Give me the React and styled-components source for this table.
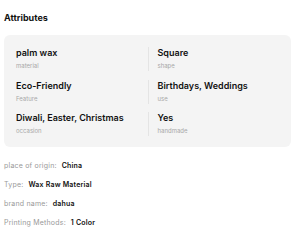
import { Fragment } from "react";
import styled, { createGlobalStyle } from "styled-components";

const GlobalStyle = createGlobalStyle`
  body {
    margin: 0;
    background: #fff;
    font-family: Inter, "Noto Sans", sans-serif;
    color: #111;
  }
`;

const Wrapper = styled.div`
  padding: 12px 9px 0 4px;
`;

const Heading = styled.h3`
  margin: 0 0 11px;
  font-size: 9px;
  font-weight: 700;
  line-height: 12px;
`;

const Card = styled.div`
  background: #f4f4f4;
  border-radius: 6px;
  padding: 12px 12px 11px;
  display: grid;
  grid-template-columns: 1fr 1fr;
  row-gap: 8.5px;
`;

const Cell = styled.div`
  display: flex;
  flex-direction: column;
  padding-left: ${p => (p.$right ? "9px" : "0")};
  border-left: ${p => (p.$right ? "1px solid #e4e4e4" : "none")};
`;

const Value = styled.div`
  font-size: 9px;
  font-weight: 600;
  line-height: 12px;
`;

const Label = styled.div`
  margin-top: 2px;
  font-size: 6px;
  color: #a8a8a8;
  line-height: 10px;
`;

const Specs = styled.div`
  margin-top: 9px;
  display: flex;
  flex-direction: column;
`;

const SpecRow = styled.div`
  font-size: 7px;
  letter-spacing: 0.2px;
  line-height: 19px;
  color: #999;
`;

const SpecValue = styled.span`
  color: #111;
  font-weight: 600;
  margin-left: 5px;
`;

const attributes = [
  ["palm wax", "material", "Square", "shape"],
  ["Eco-Friendly", "Feature", "Birthdays, Weddings", "use"],
  ["Diwali, Easter, Christmas", "occasion", "Yes", "handmade"]
];

const specs = [
  ["place of origin:", "China"],
  ["Type:", "Wax Raw Material"],
  ["brand name:", "dahua"],
  ["Printing Methods:", "1 Color"]
];

export default function App() {
  return (
    <Wrapper>
      <GlobalStyle />
      <Heading>Attributes</Heading>
      <Card>
        {attributes.map(([v1, l1, v2, l2]) => (
          <Fragment key={v1}>
            <Cell>
              <Value>{v1}</Value>
              <Label>{l1}</Label>
            </Cell>
            <Cell $right>
              <Value>{v2}</Value>
              <Label>{l2}</Label>
            </Cell>
          </Fragment>
        ))}
      </Card>
      <Specs>
        {specs.map(([k, v]) => (
          <SpecRow key={k}>
            {k}
            <SpecValue>{v}</SpecValue>
          </SpecRow>
        ))}
      </Specs>
    </Wrapper>
  );
}
